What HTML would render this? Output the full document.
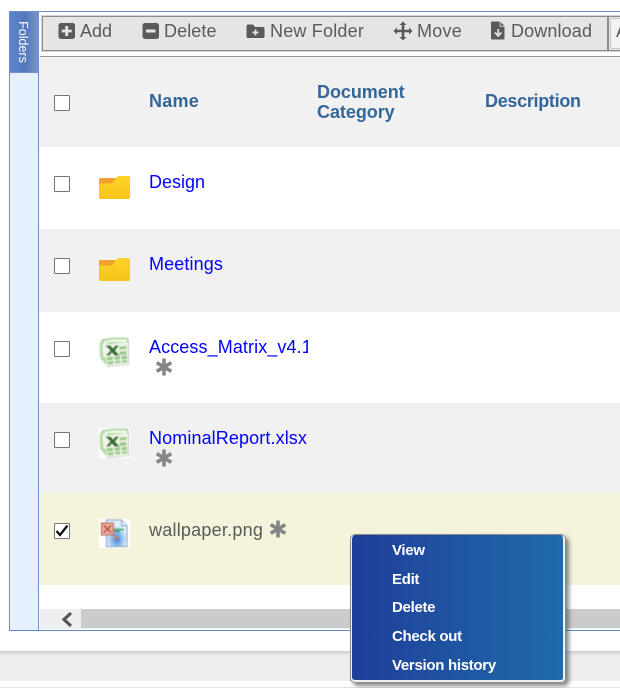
<!DOCTYPE html>
<html><head><meta charset="utf-8"><style>
html,body{margin:0;padding:0;background:#fff}
body{width:620px;height:688px;overflow:hidden;position:relative;font-family:"Liberation Sans",sans-serif}
.a{position:absolute}
.t{position:absolute;white-space:nowrap;font-size:18px;line-height:22px}
.tb{color:#5a5a5a;top:20px}
.h{color:#336699;font-weight:bold}
.l{color:#0000ff}
.cb{position:absolute;left:54px;width:14px;height:14px;border:1px solid #767676;background:#fff;border-radius:1px}
.m{position:absolute;left:392px;color:#fff;font-weight:bold;font-size:15px;line-height:18px;white-space:nowrap;letter-spacing:-.3px}
svg{position:absolute;overflow:visible}
</style></head><body>
<!-- outer frame -->
<div class="a" style="left:9px;top:11px;width:611px;height:618px;border-top:1px solid #6f8fc9;border-left:1px solid #6c8fcf;border-bottom:1px solid #5f86cc"></div>
<div class="a" style="left:10px;top:12px;width:28px;height:618px;background:#e6f0ff;border-right:1px solid #6c8fcf"></div>
<div class="a" style="left:10px;top:12px;width:28px;height:60px;background:linear-gradient(90deg,#5f86cc,#5278bc 55%,#7a94c8);border-bottom:1px solid #6c8fcf"></div>
<div class="t" style="left:22.500px;top:42px;color:#fff;font-size:12.500px;line-height:14px;transform:translate(-50%,-50%) rotate(90deg)">Folders</div>

<!-- toolbar -->
<div class="a" style="left:39px;top:12px;width:581px;height:45px;background:#fff"></div>
<div class="a" style="left:41px;top:15px;width:579px;height:37px;border:1px solid #d2d2d2;border-right:0;box-sizing:border-box"></div>
<div class="a" style="left:42px;top:16px;width:578px;height:35px;background:#e5e5e5;border:1px solid #8c8c8c;border-right:0;box-sizing:border-box"></div>
<div class="a" style="left:607px;top:17px;width:2px;height:33px;background:#8c8c8c"></div>
<div class="a" style="left:610px;top:18px;width:14px;height:31px;background:#f2f2f2;border:1px solid #c8c8c8;border-radius:3px;box-sizing:border-box"></div>
<div class="t" style="left:616px;top:20px;color:#5a5a5a">A</div>
<div class="a" style="left:40px;top:56px;width:580px;height:1px;background:#999"></div>

<svg style="left:0;top:0" width="620" height="60">
<rect x="58.500" y="23" width="16.500" height="16" rx="2.500" fill="#5a5a5a"/><path d="M66.700 26v10M61.700 31h10" stroke="#e5e5e5" stroke-width="2.800"/>
<rect x="142.500" y="23" width="16.500" height="16" rx="2.500" fill="#5a5a5a"/><path d="M146 31h9.500" stroke="#e5e5e5" stroke-width="3"/>
<path d="M246.500 26a1.500 1.500 0 0 1 1.500-1.500h5l2 2.500h8a1.500 1.500 0 0 1 1.500 1.500v8a1.500 1.500 0 0 1-1.500 1.500h-15a1.500 1.500 0 0 1-1.500-1.500z" fill="#5a5a5a"/><path d="M255.500 29.500v6M252.500 32.500h6" stroke="#e5e5e5" stroke-width="1.700"/>
<path d="M403 21.500l3.500 3.500h-2.200v4.700h4.700v-2.200l3.500 3.500-3.500 3.500v-2.200h-4.700v4.700h2.200l-3.500 3.500-3.500-3.500h2.200v-4.700h-4.700v2.200l-3.500-3.500 3.500-3.500v2.200h4.700v-4.700h-2.200z" fill="#5a5a5a"/>
<path d="M492 21.500h8l4.500 4.500v12.500a1 1 0 0 1-1 1h-11.500a1 1 0 0 1-1-1v-16a1 1 0 0 1 1-1z" fill="#5a5a5a"/><path d="M498.200 29v5.500M495 32.500l3.200 3.500 3.200-3.500" stroke="#e5e5e5" stroke-width="1.700" fill="none"/><path d="M500 21.500v4.800h4.500" stroke="#e5e5e5" stroke-width=".8" fill="none"/>
</svg>
<div class="t tb" style="left:80px">Add</div>
<div class="t tb" style="left:164px;letter-spacing:.1px">Delete</div>
<div class="t tb" style="left:270px;letter-spacing:.2px">New Folder</div>
<div class="t tb" style="left:417px;letter-spacing:.25px">Move</div>
<div class="t tb" style="left:511px;letter-spacing:.13px">Download</div>

<!-- table rows -->
<div class="a" style="left:39px;top:57px;width:581px;height:90px;background:#f1f1f1"></div>
<div class="a" style="left:39px;top:229px;width:581px;height:83px;background:#f1f1f1"></div>
<div class="a" style="left:39px;top:403px;width:581px;height:90px;background:#f1f1f1"></div>
<div class="a" style="left:39px;top:493px;width:581px;height:92px;background:#f4f4dc"></div>

<div class="cb" style="top:95px"></div>
<div class="cb" style="top:176px"></div>
<div class="cb" style="top:258px"></div>
<div class="cb" style="top:341px"></div>
<div class="cb" style="top:432px"></div>
<div class="cb" style="top:523px"></div>
<svg style="left:54px;top:523px" width="16" height="16"><path d="M2.500 8l3.500 4 7.500-9.500" stroke="#111" stroke-width="2.300" fill="none"/></svg>

<div class="t h" style="left:149px;top:90px;letter-spacing:.25px">Name</div>
<div class="t h" style="left:317px;top:82px;line-height:20px;letter-spacing:-.05px">Document<br>Category</div>
<div class="t h" style="left:485px;top:90px;letter-spacing:-.3px">Description</div>

<div class="t l" style="left:149px;top:171px">Design</div>
<div class="t l" style="left:149px;top:253px;letter-spacing:.12px">Meetings</div>
<div class="t l" style="left:149px;top:336px;width:159px;overflow:hidden;letter-spacing:.1px">Access_Matrix_v4.1.xlsx</div>
<div class="t l" style="left:149px;top:427px;letter-spacing:.11px">NominalReport.xlsx</div>
<div class="t" style="left:149px;top:519px;color:#5a5a5a;letter-spacing:.23px">wallpaper.png</div>

<!-- asterisks -->
<svg style="left:155px;top:358px" width="18" height="18"><use href="#st"/></svg>
<svg style="left:155px;top:449px" width="18" height="18"><use href="#st"/></svg>
<svg style="left:269px;top:520px" width="18" height="18"><use href="#st"/></svg>
<svg width="0" height="0"><defs>
<g id="st"><path d="M9 .500v17M1.700 4.700l14.600 8.600M16.300 4.700L1.700 13.300" stroke="#858585" stroke-width="3.600"/></g>
<linearGradient id="fy" x1="0" y1="0" x2="0" y2="1"><stop offset="0" stop-color="#ffd32a"/><stop offset="1" stop-color="#f6c419"/></linearGradient>
<filter id="sf" x="-5%" y="-5%" width="110%" height="110%"><feGaussianBlur stdDeviation=".45"/></filter>
<g id="folder"><path d="M0 3.500a1.500 1.500 0 0 1 1.500-1.500h17l2 1v7h-20.500z" fill="#f2a12a"/><path d="M0 8.500a1 1 0 0 1 1-1h11.500c2.500 0 4-7.500 7.500-7.500h9.500a1.500 1.500 0 0 1 1.500 1.500v20a1.500 1.500 0 0 1-1.500 1.500h-28a1.500 1.500 0 0 1-1.500-1.500z" fill="url(#fy)"/></g>
<g id="xl" filter="url(#sf)"><rect width="31" height="30" fill="#fff"/><path d="M.500 7L3 2 14 .500h15l1 3v24L8 29 1 21z" fill="#b6dba6"/><path d="M3.500 8l2.500-4 9-1.500h13l-1 2.500H9L7 8l.500 13-3-1z" fill="#f3f8ee"/><path d="M6 8l24-2.500V28L8 30z" fill="#c9c9c0"/><path d="M6 7.500l23-2.500v22.500L8 29z" fill="#eff3e6"/><path d="M20.500 9.500l7-.500v3l-7 .500zM20.500 14.500l7-.500v3.500l-7 .500zM8 20l6-.5V23l-6 .5zM15.500 19.500l5.500-.5v3.500l-5.500.5zM22.500 19l5.500-.5V22l-5.500.5zM8.500 24.500l6-.5V27l-5.500.5zM16 24l5.500-.5V26l-5.500.5zM23 23.500l5-.5v2.500l-5 .5z" fill="#9bca8a"/><path d="M6.500 8.500h5l2.500 3 2.500-3h3.500l-4 5 4.500 5h-5l-2.500-3-2.500 3H7l4.500-5z" fill="#2f7030"/></g>
</defs></svg>

<!-- icons -->
<svg style="left:99px;top:176px" width="31" height="24"><use href="#folder"/></svg>
<svg style="left:99px;top:258px" width="31" height="24"><use href="#folder"/></svg>
<svg style="left:99px;top:337px" width="31" height="30"><use href="#xl"/></svg>
<svg style="left:99px;top:428px" width="31" height="30"><use href="#xl"/></svg>
<svg style="left:99px;top:519px" width="31" height="30">
<defs><radialGradient id="wp" cx=".5" cy=".72" r=".5"><stop offset="0" stop-color="#2f7fd6"/><stop offset=".55" stop-color="#97c4ee"/><stop offset="1" stop-color="#e2eefa"/></radialGradient></defs>
<rect width="31" height="29" fill="#fff"/>
<g filter="url(#sf)">
<path d="M7.500 1h15l5.500 6v20.500H7.500z" fill="url(#wp)" stroke="#7d9cc4"/>
<path d="M22.500 1v6h5.500" fill="#dbe7f5" stroke="#7d9cc4"/>
<path d="M14 10.500h11M14 12.500h7" stroke="#2e9b5e" stroke-width="1.600"/>
<path d="M15 16l4 2.500-2.500 3.500z" fill="#e8761e"/>
<rect x="2.500" y="4" width="12" height="12" fill="#eba99a" stroke="#b2553f"/>
<path d="M5 6.500l7 7M12 6.500l-7 7" stroke="#b03a22" stroke-width="1.300"/>
</g>
</svg>

<!-- scrollbar -->
<div class="a" style="left:40px;top:609px;width:580px;height:20px;background:#efefef"></div>
<div class="a" style="left:81px;top:609px;width:539px;height:19px;background:#cbcbcb"></div>
<svg style="left:59px;top:611px" width="14" height="16"><path d="M12 2L5 8.500l7 6.500" stroke="#555" stroke-width="3.200" fill="none"/></svg>

<!-- footer -->
<div class="a" style="left:0;top:651px;width:620px;height:30px;background:linear-gradient(#ccced4,#eeeeee 5px)"></div>
<div class="a" style="left:0;top:687px;width:620px;height:1px;background:#e3e3e3"></div>

<!-- context menu -->
<div class="a" style="left:350px;top:534px;width:216px;height:149px;box-sizing:border-box;border-style:solid;border-width:1px 3px 3px 2px;border-color:#f0f0f0;background:linear-gradient(90deg,#1f3f9a,#1f6aa9) padding-box;outline:1px solid #8b8b8b;outline-offset:-1px;border-radius:5px;box-shadow:3px 3px 4px rgba(70,70,70,.65)"></div>
<div class="m" style="top:542px">View</div>
<div class="m" style="top:571px">Edit</div>
<div class="m" style="top:599px">Delete</div>
<div class="m" style="top:628px">Check out</div>
<div class="m" style="top:657px">Version history</div>
</body></html>
